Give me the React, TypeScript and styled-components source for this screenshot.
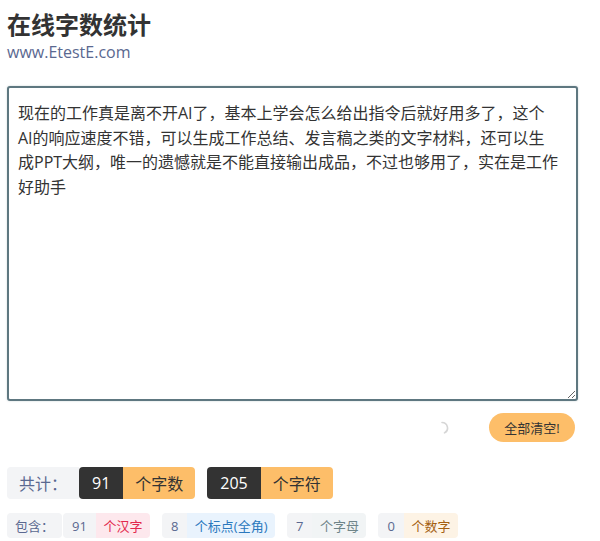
import React, { useState } from 'react';
import styled, { createGlobalStyle } from 'styled-components';

const GlobalStyle = createGlobalStyle`
  body {
    margin: 0;
    background: #fff;
    font-family: "Open Sans", "Noto Sans CJK SC", sans-serif;
    color: #333;
  }
`;

type Tone = 'red' | 'blue' | 'gray' | 'orange';

const tones: Record<Tone, { bg: string; fg: string }> = {
  red: { bg: '#fde8ed', fg: '#e3284e' },
  blue: { bg: '#e9f3fd', fg: '#2b78bd' },
  gray: { bg: '#f1f4f5', fg: '#6f8589' },
  orange: { bg: '#fdf3e5', fg: '#a45f12' },
};

const DEFAULT_TEXT =
  '现在的工作真是离不开AI了，基本上学会怎么给出指令后就好用多了，这个AI的响应速度不错，可以生成工作总结、发言稿之类的文字材料，还可以生成PPT大纲，唯一的遗憾就是不能直接输出成品，不过也够用了，实在是工作好助手';

// numbers as the site reports them for the sample text
const stats = { words: 91, chars: 205, han: 91, punct: 8, letters: 7, digits: 0 };

const details: { key: keyof typeof stats; unit: string; tone: Tone }[] = [
  { key: 'han', unit: '个汉字', tone: 'red' },
  { key: 'punct', unit: '个标点(全角)', tone: 'blue' },
  { key: 'letters', unit: '个字母', tone: 'gray' },
  { key: 'digits', unit: '个数字', tone: 'orange' },
];

export default function App() {
  const [text, setText] = useState(DEFAULT_TEXT);

  return (
    <Page>
      <GlobalStyle />
      <Title>在线字数统计</Title>
      <Site>www.EtestE.com</Site>
      <Editor value={text} onChange={(e) => setText(e.target.value)} />
      <Actions>
        <Spinner viewBox="0 0 14 14">
          <path d="M7 1.5 A5.5 5.5 0 0 1 9.5 11.9" fill="none" stroke="#d6d6d6" strokeWidth="1.6" strokeLinecap="round" />
        </Spinner>
        <ClearButton onClick={() => setText('')}>全部清空!</ClearButton>
      </Actions>
      <TotalRow>
        <TotalLabel>共计：</TotalLabel>
        <TotalGroup>
          <TotalNum>{stats.words}</TotalNum>
          <TotalUnit>个字数</TotalUnit>
        </TotalGroup>
        <TotalGroup>
          <TotalNum>{stats.chars}</TotalNum>
          <TotalUnit>个字符</TotalUnit>
        </TotalGroup>
      </TotalRow>
      <DetailRow>
        {details.map((d, i) => (
          <DetailGroup key={d.key}>
            {i === 0 && <DetailLabel>包含：</DetailLabel>}
            <DetailNum>{stats[d.key]}</DetailNum>
            <DetailUnit tone={d.tone}>{d.unit}</DetailUnit>
          </DetailGroup>
        ))}
      </DetailRow>
    </Page>
  );
}

const Page = styled.div`
  width: 571px;
  padding: 9px 0 0 7px;
`;

const Title = styled.h1`
  margin: 0;
  font-size: 24px;
  line-height: 32px;
  font-weight: 700;
  color: #333;
`;

const Site = styled.div`
  font-size: 16px;
  line-height: 22px;
  color: #5a6890;
`;

const Editor = styled.textarea`
  display: block;
  box-sizing: border-box;
  width: 571px;
  height: 315px;
  margin-top: 23px;
  padding: 13px 17px 6px 9px;
  border: 2px solid #5e7780;
  border-radius: 3px;
  box-shadow: 0 0 2px rgba(94, 119, 128, 0.35);
  outline: none;
  resize: vertical;
  font-family: "Open Sans", "Noto Sans CJK SC", sans-serif;
  font-size: 16px;
  line-height: 24.5px;
  color: #333;
`;

const Actions = styled.div`
  display: flex;
  align-items: center;
  justify-content: flex-end;
  gap: 40px;
  height: 29px;
  margin-top: 12px;
  padding-right: 3px;
`;

const Spinner = styled.svg`
  width: 14px;
  height: 14px;
`;

const ClearButton = styled.button`
  height: 29px;
  width: 86px;
  padding: 0;
  border: none;
  border-radius: 15px;
  background: #fdbe69;
  color: #333;
  font-family: "Open Sans", "Noto Sans CJK SC", sans-serif;
  font-size: 13px;
  cursor: pointer;
`;

const TotalRow = styled.div`
  display: flex;
  align-items: center;
  gap: 12px;
  margin-top: 25px;
  height: 32px;
`;

const TotalLabel = styled.div`
  display: flex;
  align-items: center;
  justify-content: center;
  height: 32px;
  width: 72px;
  margin-right: -12px;
  border-radius: 4px 0 0 4px;
  background: #f3f4f6;
  color: #5a6890;
  font-size: 16px;
`;

const TotalGroup = styled.div`
  display: flex;
  height: 32px;
  border-radius: 4px;
  overflow: hidden;
  font-size: 16px;
`;

const TotalNum = styled.div`
  display: flex;
  align-items: center;
  padding: 0 13px;
  background: #333;
  color: #fff;
`;

const TotalUnit = styled.div`
  display: flex;
  align-items: center;
  padding: 0 12px;
  background: #fdbe69;
  color: #333;
`;

const DetailRow = styled.div`
  display: flex;
  gap: 12px;
  margin-top: 14px;
  height: 25px;
  font-size: 13px;
`;

const DetailGroup = styled.div`
  display: flex;
  gap: 1px;
  height: 25px;
`;

const DetailLabel = styled.div`
  display: flex;
  align-items: center;
  padding: 0 8px;
  border-radius: 4px;
  background: #f3f4f6;
  color: #5a6890;
`;

const DetailNum = styled.div`
  display: flex;
  align-items: center;
  padding: 0 9px;
  border-radius: 4px 0 0 4px;
  background: #f3f4f6;
  color: #5a6890;
`;

const DetailUnit = styled.div<{ tone: Tone }>`
  display: flex;
  align-items: center;
  padding: 0 7.5px;
  margin-left: -1px;
  border-radius: 0 4px 4px 0;
  background: ${({ tone }) => tones[tone].bg};
  color: ${({ tone }) => tones[tone].fg};
`;
